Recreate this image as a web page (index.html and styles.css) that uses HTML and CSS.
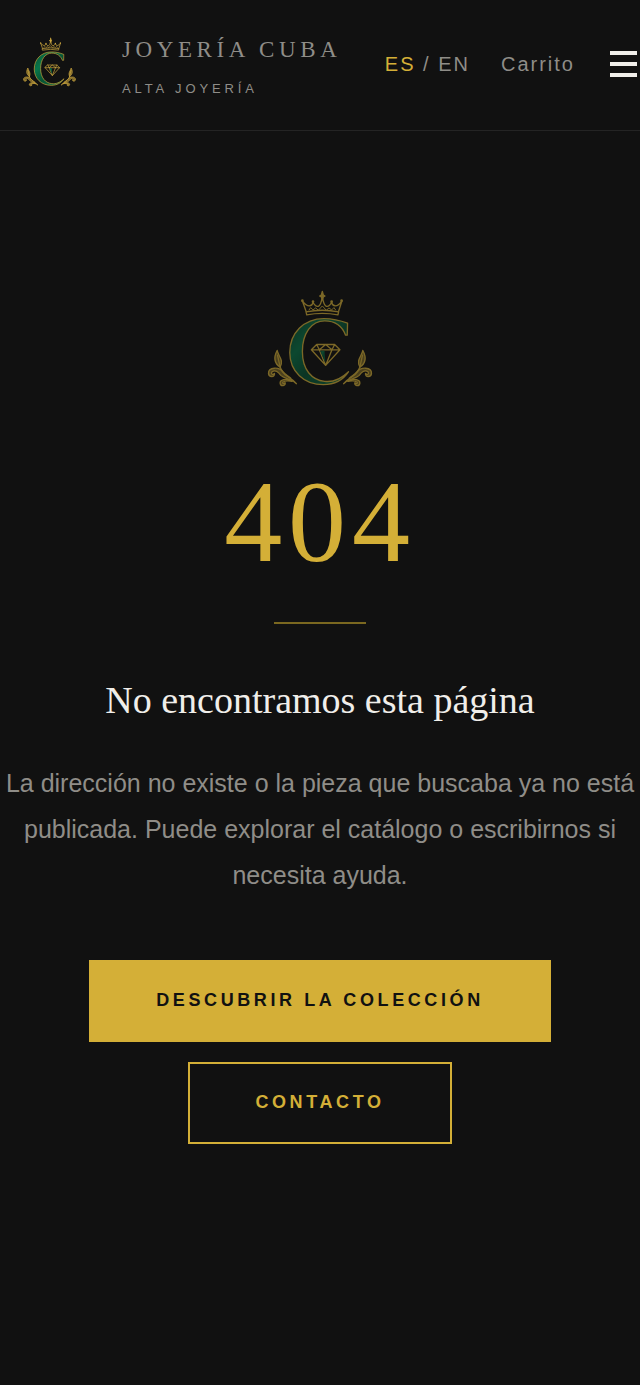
FILE: index.html
```html
<!DOCTYPE html>
<html lang="es">
<head>
<meta charset="utf-8">
<meta name="viewport" content="width=device-width, initial-scale=1">
<title>Joyería Cuba</title>
<link rel="stylesheet" href="styles.css">
</head>
<body>
<svg class="defs" width="0" height="0" aria-hidden="true">
  <defs>
    <linearGradient id="emerald" x1="0" y1="0" x2="1" y2="1">
      <stop offset="0" stop-color="#0b4a30"/>
      <stop offset=".3" stop-color="#08764a"/>
      <stop offset=".55" stop-color="#075334"/>
      <stop offset="1" stop-color="#087246"/>
    </linearGradient>
    <symbol id="emblem" viewBox="35 28 316 292">
      <g fill="none" stroke="currentColor" stroke-width="4" stroke-linejoin="round" stroke-linecap="round">
        <path d="M151 94 Q200 84 249 94 L247 103 Q200 94 153 103Z"/>
        <path d="M151 92 L140 61 Q151 76 161 76 Q170 75 172 65 Q180 80 188 77 Q196 74 200 48 Q204 74 212 77 Q220 80 228 65 Q230 75 239 76 Q249 76 259 61 L249 92"/>
        <path d="M160 88 L165 81 L172 88 L180 82 L188 89 L200 76 L212 89 L220 82 L228 88 L235 81 L240 88" stroke-width="3"/>
        <path d="M200 32 L203 43 L208 46 L203 49 L200 57 L197 49 L192 46 L197 43Z" fill="currentColor"/>
        <path d="M276 128 C253 119 232 114 205 114 C144 114 102 158 102 216 C102 273 145 313 203 313 C237 313 263 299 279 274 C255 297 231 306 207 303 C168 299 140 268 140 213 C140 159 167 121 207 121 C240 121 261 140 270 164 L275 164Z" fill="url(#emerald)"/>
        <path d="M183 192 H237 L253 208 L210 255 L167 208Z M167 208 H253 M183 192 L191 208 L210 192 L229 208 L237 192 M191 208 L210 255 L229 208"/>
        <path d="M193 211 H207 L209 247Z" fill="url(#emerald)" stroke="none"/>
      </g>
      <g id="leaf" fill="currentColor" fill-opacity=".55" stroke="currentColor" stroke-width="4" stroke-linejoin="round" stroke-linecap="round">
        <path d="M73 260 C53 247 54 229 64 210 C67 227 85 239 73 260Z"/>
        <path d="M65 224 L73 260 C79 279 93 283 105 294" fill="none"/>
        <path d="M122 310 C103 288 88 289 81 275 C72 259 37 259 38 279 C39 292 58 291 56 279 C50 285 45 281 48 275 C59 266 68 276 75 285 C86 296 104 294 122 310Z"/>
        <path d="M109 303 C90 292 72 298 73 309 C75 320 91 317 88 307 C85 312 80 310 81 306 C89 299 99 302 109 303Z"/>
      </g>
      <use href="#leaf" transform="translate(386 0) scale(-1 1)"/>
      <g fill="currentColor">
        <circle cx="140" cy="60" r="4"/><circle cx="172" cy="63" r="4"/><circle cx="228" cy="63" r="4"/><circle cx="258" cy="60" r="4"/>
      </g>
    </symbol>
  </defs>
</svg>
<header class="header">
  <a class="brand" href="#" aria-label="Joyería Cuba, alta joyería">
    <svg class="brand-logo" aria-hidden="true"><use href="#emblem"/></svg>
    <span class="brand-text">
      <span class="brand-name">JOYERÍA CUBA</span>
      <span class="brand-tagline">ALTA JOYERÍA</span>
    </span>
  </a>
  <nav class="tools" aria-label="Principal">
    <div class="languages"><a class="current" href="#">ES</a> / <a href="#">EN</a></div>
    <a href="#">Carrito</a>
    <button class="menu" type="button" aria-label="Abrir menú"><span></span><span></span><span></span></button>
  </nav>
</header>
<main class="error">
  <svg class="error-logo" aria-hidden="true"><use href="#emblem"/></svg>
  <p class="code">404</p>
  <hr class="rule">
  <h1 class="title">No encontramos esta página</h1>
  <p class="message">La dirección no existe o la pieza que buscaba ya no está publicada. Puede explorar el catálogo o escribirnos si necesita ayuda.</p>
  <div class="actions">
    <a class="button primary" href="#">DESCUBRIR LA COLECCIÓN</a>
    <a class="button" href="#">CONTACTO</a>
  </div>
</main>
</body>
</html>
```
FILE: styles.css
```css
:root {
  --gold: #d4af37;
  --ink: #111111;
  --muted: #8f8d88;
  --light: #f0eeea;
}
* { box-sizing: border-box; }
body {
  margin: 0;
  background: var(--ink);
  color: var(--muted);
  font-family: "Liberation Sans", Arial, sans-serif;
}
a { color: inherit; text-decoration: none; }
.defs { position: absolute; }
.header {
  display: flex;
  align-items: center;
  justify-content: space-between;
  padding: 31px 3px 32px 23px;
  border-bottom: 1px solid #242424;
}
.brand { display: flex; align-items: center; gap: 46px; }
.brand-logo { width: 53px; height: 50px; margin-bottom: 6px; color: #cfa93f; }
.brand-text { display: flex; flex-direction: column; gap: 11px; white-space: nowrap; }
.brand-name {
  font: 23px/38px "Liberation Serif", "Times New Roman", serif;
  letter-spacing: .2em;
}
.brand-tagline { font-size: 13px; line-height: 18px; letter-spacing: .3em; }
.tools {
  display: flex;
  align-items: center;
  gap: 31px;
  margin-bottom: 2px;
  font-size: 20px;
  line-height: 24px;
  letter-spacing: .1em;
  white-space: nowrap;
}
.current { color: var(--gold); }
.menu {
  display: flex;
  flex-direction: column;
  gap: 7px;
  width: 27px;
  margin-left: 4px;
  padding: 0;
  border: 0;
  background: none;
}
.menu span { width: 100%; height: 4px; background: var(--light); }
.error {
  display: flex;
  flex-direction: column;
  align-items: center;
  padding: 159px 5px 240px;
  text-align: center;
}
.error-logo { width: 106px; height: 97px; color: #d4b03a; opacity: .55; }
.code {
  margin: 77px 0 42px;
  color: var(--gold);
  font: 116px/116px "Liberation Serif", "Times New Roman", serif;
  letter-spacing: .05em;
}
.rule { width: 92px; height: 2px; margin: 0; border: 0; background: #7b6820; }
.title {
  margin: 52px 0 36px;
  color: var(--light);
  font: 38px/48px "Liberation Serif", "Times New Roman", serif;
}
.message { max-width: 640px; margin: 0; font-size: 25px; line-height: 46px; }
.actions { display: flex; flex-direction: column; align-items: center; gap: 20px; margin-top: 62px; }
.button {
  padding: 27px 65px 29px;
  border: 2px solid var(--gold);
  color: var(--gold);
  font-size: 18px;
  font-weight: bold;
  line-height: 22px;
  letter-spacing: .2em;
}
.primary { background: var(--gold); color: var(--ink); }
```
